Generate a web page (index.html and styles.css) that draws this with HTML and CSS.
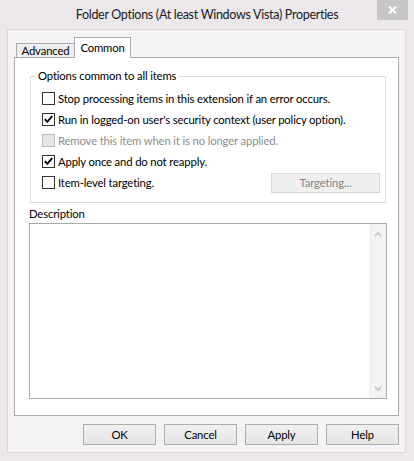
FILE: index.html
```html
<!DOCTYPE html>
<html>
<head>
<meta charset="utf-8">
<link rel="stylesheet" href="styles.css">
</head>
<body>
<div class="window">
  <div class="titlebar">
    <span class="title">Folder Options (At least Windows Vista) Properties</span>
    <span class="close"><svg width="9" height="8" viewBox="0 0 9 8"><path d="M1 0.5 L8 7.5 M8 0.5 L1 7.5" stroke="#fff" stroke-width="1.8" fill="none"/></svg></span>
  </div>
  <div class="client">
    <div class="tabs">
      <div class="tab">Advanced</div>
      <div class="tab active">Common</div>
    </div>
    <div class="panel">
      <fieldset class="group">
        <legend>Options common to all items</legend>
        <div class="row"><span class="cb"></span><span>Stop processing items in this extension if an error occurs.</span></div>
        <div class="row"><span class="cb"><svg width="11" height="11" viewBox="0 0 11 11"><path d="M1.8 5.2 L4.3 7.8 L9.2 2.2" stroke="#000" stroke-width="1.9" fill="none"/></svg></span><span>Run in logged-on user's security context (user policy option).</span></div>
        <div class="row disabled"><span class="cb"></span><span>Remove this item when it is no longer applied.</span></div>
        <div class="row"><span class="cb"><svg width="11" height="11" viewBox="0 0 11 11"><path d="M1.8 5.2 L4.3 7.8 L9.2 2.2" stroke="#000" stroke-width="1.9" fill="none"/></svg></span><span>Apply once and do not reapply.</span></div>
        <div class="row"><span class="cb"></span><span>Item-level targeting.</span><span class="btn-target">Targeting...</span></div>
      </fieldset>
      <div class="desc-label">Description</div>
      <div class="desc">
        <div class="scroll">
          <span class="arrow"><svg width="8" height="5" viewBox="0 0 8 5"><path d="M0.7 4.3 L4 1 L7.3 4.3" stroke="#c4c4c4" stroke-width="1.5" fill="none"/></svg></span>
          <span class="arrow"><svg width="8" height="5" viewBox="0 0 8 5"><path d="M0.7 0.7 L4 4 L7.3 0.7" stroke="#c4c4c4" stroke-width="1.5" fill="none"/></svg></span>
        </div>
      </div>
    </div>
    <div class="buttons">
      <span class="btn">OK</span>
      <span class="btn">Cancel</span>
      <span class="btn">Apply</span>
      <span class="btn">Help</span>
    </div>
  </div>
</div>
</body>
</html>
```
FILE: styles.css
```css
* { box-sizing: border-box; }
html, body { margin: 0; padding: 0; }
body {
  width: 414px;
  height: 461px;
  overflow: hidden;
  background: #ebe7eb;
  font-family: Lato, "Open Sans", "Liberation Sans", sans-serif;
  font-size: 11.3px;
  letter-spacing: -0.15px;
  color: #000;
}
.window { position: relative; width: 414px; height: 461px; }
.titlebar {
  height: 29px;
  display: flex;
  align-items: center;
  justify-content: center;
}
.title { font-size: 12.5px; letter-spacing: -0.3px; color: #1a1a1a; }
.close {
  position: absolute;
  top: 0;
  left: 377px;
  width: 31px;
  height: 20px;
  background: #c6c6c6;
  display: flex;
  align-items: center;
  justify-content: center;
}
.client {
  margin-left: 7px;
  width: 399px;
  height: 424px;
  border: 1px solid #dcd8dc;
  background: #f5f2f5;
  padding: 7px 6px;
  display: flex;
  flex-direction: column;
}
.tabs {
  height: 20px;
  display: flex;
  align-items: flex-end;
  padding-left: 2px;
  position: relative;
  z-index: 1;
}
.tab {
  width: 59px;
  height: 14px;
  border: 1px solid #acacac;
  border-bottom: none;
  background: #efefef;
  display: flex;
  align-items: center;
  justify-content: center;
  line-height: 13px;
}
.tab.active {
  width: 57px;
  height: 21px;
  margin-left: -1px;
  margin-bottom: -1px;
  background: #fff;
  padding-bottom: 2px;
}
.panel {
  height: 359px;
  border: 1px solid #acacac;
  background: #fff;
  display: flex;
  flex-direction: column;
}
.group {
  margin: 10px 0 0 15px;
  width: 356px;
  border: 1px solid #dcdcdc;
  padding: 4px 5px 9px 11px;
  min-width: 0;
}
.group legend {
  padding: 0 2px;
  margin-left: -6px;
  line-height: 16px;
}
.row {
  height: 21px;
  display: flex;
  align-items: center;
}
.cb {
  width: 13px;
  height: 13px;
  border: 1px solid #333;
  background: #fff;
  margin-right: 3px;
  flex-shrink: 0;
  display: flex;
}
.row.disabled { color: #8d8d8d; }
.row.disabled .cb { border-color: #bcbcbc; background: #e6e6e6; }
.btn-target {
  margin-left: auto;
  width: 109px;
  height: 20px;
  border: 1px solid #d9d9d9;
  background: #efefef;
  color: #838383;
  display: flex;
  align-items: center;
  justify-content: center;
}
.desc-label {
  margin: 3px 0 1px 14px;
  line-height: 16px;
}
.desc {
  margin-left: 14px;
  width: 358px;
  height: 176px;
  border: 1px solid #a9a9a9;
  display: flex;
  justify-content: flex-end;
}
.scroll {
  width: 17px;
  height: 100%;
  background: #f4f1f4;
  display: flex;
  flex-direction: column;
  justify-content: space-between;
}
.arrow {
  height: 20px;
  display: flex;
  align-items: center;
  justify-content: center;
}
.buttons {
  margin-top: 8px;
  display: flex;
  justify-content: flex-end;
  gap: 8px;
}
.btn {
  width: 73px;
  height: 21px;
  border: 1px solid #acacac;
  background: linear-gradient(#f0f0f0, #e5e5e5);
  display: flex;
  align-items: center;
  justify-content: center;
}
```
